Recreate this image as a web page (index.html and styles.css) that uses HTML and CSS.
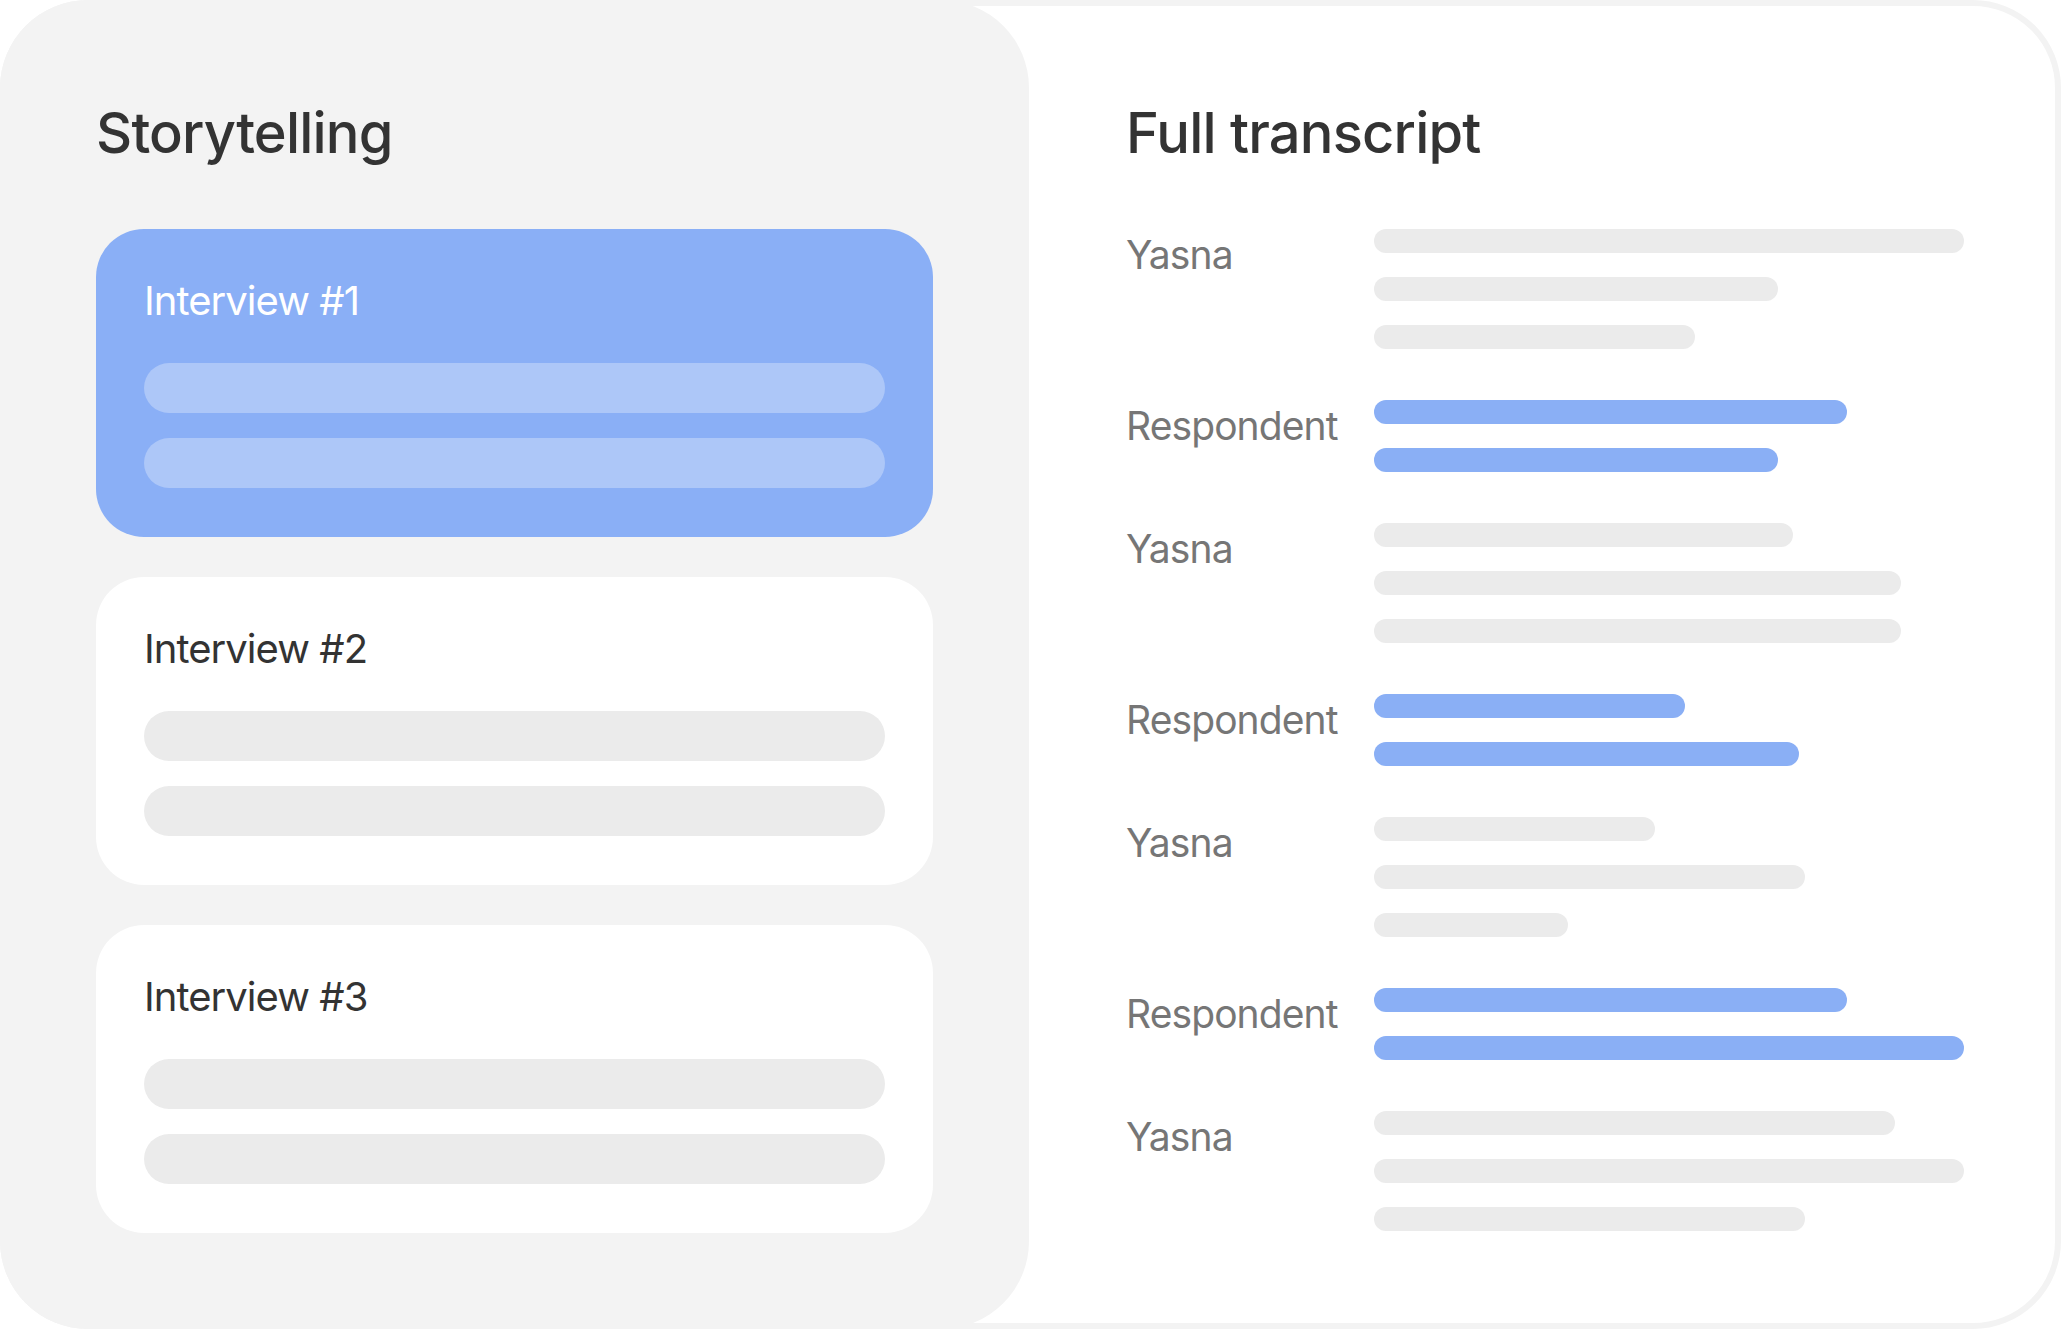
FILE: index.html
```html
<!doctype html>
<html>
<head>
	<meta charset="utf-8" />
	<title>Storytelling - Full transcript</title>
	<link rel="stylesheet" href="styles.css">
</head>
<body>
	<div class="board">
		<section class="stories">
			<h1 class="title">Storytelling</h1>
			<div class="card card-active">
				<div class="card-name">Interview #1</div>
				<div class="pill"></div>
				<div class="pill"></div>
			</div>
			<div class="card">
				<div class="card-name">Interview #2</div>
				<div class="pill"></div>
				<div class="pill"></div>
			</div>
			<div class="card">
				<div class="card-name">Interview #3</div>
				<div class="pill"></div>
				<div class="pill"></div>
			</div>
		</section>
		<section class="transcript">
			<h1 class="title">Full transcript</h1>
			<div class="rows">
				<div class="speaker">Yasna</div>
				<div class="lines">
					<div class="line" style="width: 590px"></div>
					<div class="line" style="width: 404px"></div>
					<div class="line" style="width: 321px"></div>
				</div>
				<div class="speaker">Respondent</div>
				<div class="lines">
					<div class="line line-blue" style="width: 473px"></div>
					<div class="line line-blue" style="width: 404px"></div>
				</div>
				<div class="speaker">Yasna</div>
				<div class="lines">
					<div class="line" style="width: 419px"></div>
					<div class="line" style="width: 527px"></div>
					<div class="line" style="width: 527px"></div>
				</div>
				<div class="speaker">Respondent</div>
				<div class="lines">
					<div class="line line-blue" style="width: 311px"></div>
					<div class="line line-blue" style="width: 425px"></div>
				</div>
				<div class="speaker">Yasna</div>
				<div class="lines">
					<div class="line" style="width: 281px"></div>
					<div class="line" style="width: 431px"></div>
					<div class="line" style="width: 194px"></div>
				</div>
				<div class="speaker">Respondent</div>
				<div class="lines">
					<div class="line line-blue" style="width: 473px"></div>
					<div class="line line-blue" style="width: 590px"></div>
				</div>
				<div class="speaker">Yasna</div>
				<div class="lines">
					<div class="line" style="width: 521px"></div>
					<div class="line" style="width: 590px"></div>
					<div class="line" style="width: 431px"></div>
				</div>
			</div>
		</section>
	</div>
</body>
</html>
```

FILE: styles.css
```css
body { margin: 0; background: #fff; font-family: 'Inter', 'Noto Sans', sans-serif; }

.board { display: flex; width: 2061px; height: 1329px; box-sizing: border-box; border: 6px solid #f3f3f3; border-radius: 88px; background: #fff; }

.title { margin: 4px 0 62px 0; font-size: 56px; line-height: 67px; font-weight: 500; color: #333; letter-spacing: -0.8px; }

/* left column */
.stories { flex: none; width: 1029px; margin: -6px 0 -6px -6px; padding: 96px; box-sizing: border-box; background: #f3f3f3; border-radius: 88px; display: flex; flex-direction: column; gap: 40px; }
.stories .title { margin-bottom: 22px; }
.card { display: flex; flex-direction: column; gap: 25px; padding: 48px 48px 49px; border-radius: 48px; background: #fff; }
.card-name { font-size: 40px; line-height: 48px; color: #333; margin-bottom: 13px; letter-spacing: -0.95px; }
.pill { height: 50px; border-radius: 25px; background: #ebebeb; }
.card-active { background: #8aaff6; }
.card-active .card-name { color: #fff; }
.card-active .pill { background: #adc7f8; }

/* right column */
.transcript { flex: 1; padding: 90px 91px 0 97px; }
.rows { display: grid; grid-template-columns: 248px 1fr; row-gap: 51px; }
.speaker { font-size: 39px; line-height: 48px; color: #767676; letter-spacing: -0.9px; margin-top: 2px; }
.lines { display: flex; flex-direction: column; gap: 24px; }
.line { height: 24px; border-radius: 12px; background: #ebebeb; }
.line-blue { background: #8aaff5; }
```
